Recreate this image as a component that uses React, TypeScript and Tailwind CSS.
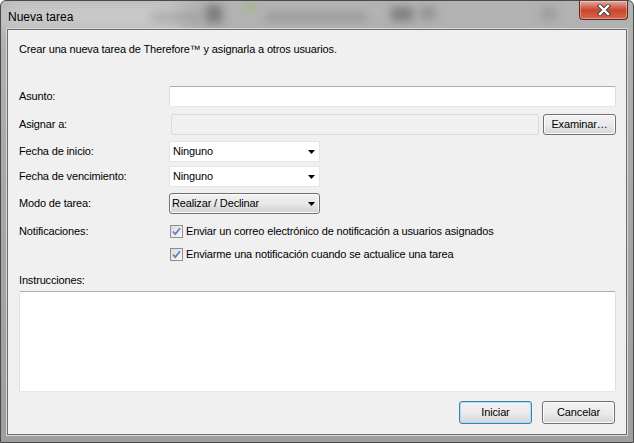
import React from "react";

const font = { fontFamily: '"Liberation Sans", Arial, sans-serif' };

function Arrow() {
  return (
    <svg width="7" height="4" viewBox="0 0 7 4" className="shrink-0">
      <path d="M0 0h7L3.5 4z" fill="#000" />
    </svg>
  );
}

function Check() {
  return (
    <span className="w-[13px] h-[13px] shrink-0 border border-[#8f8f8f] bg-gradient-to-br from-[#dcdcdc] to-[#f8f8f8] grid place-items-center">
      <svg width="9" height="9" viewBox="0 0 9 9">
        <path d="M1 4.5l2.3 2.6L8 1.2" fill="none" stroke="#5f7fc0" strokeWidth="1.7" />
      </svg>
    </span>
  );
}

function Row({ label, children, className = "" }: { label: string; children?: React.ReactNode; className?: string }) {
  return (
    <div className={`flex items-center ${className}`}>
      <span className="w-[150px] shrink-0">{label}</span>
      {children}
    </div>
  );
}

function Combo({ value }: { value: string }) {
  return (
    <div className="w-[151px] h-[21px] bg-white border border-[#e2e5ea] flex items-center justify-between pl-[3px] pr-[4px]">
      <span>{value}</span>
      <Arrow />
    </div>
  );
}

export default function App() {
  return (
    <div
      className="w-[634px] h-[443px] relative overflow-hidden flex flex-col rounded-t-[6px] border border-[#4a4a4a] bg-gradient-to-b from-[#b3b3b3] via-[#a6a6a6] to-[#9e9e9e] text-[11px] tracking-[-0.15px] text-black"
      style={font}
    >
      {/* blurred glass behind title bar */}
      <div className="absolute left-[0px] top-[0px] w-[180px] h-[30px] bg-[#d2d2d2] blur-[10px] opacity-80" />
      <div className="absolute left-[205px] top-[4px] w-[16px] h-[18px] bg-[#555] blur-[5px] opacity-60" />
      <div className="absolute left-[245px] top-[3px] w-[10px] h-[6px] bg-[#8fbf5a] blur-[3px] opacity-60" />
      <div className="absolute left-[265px] top-[12px] w-[100px] h-[8px] bg-[#7a7a7a] blur-[5px] opacity-50" />
      <div className="absolute left-[150px] top-[12px] w-[50px] h-[8px] bg-[#8a8a8a] blur-[5px] opacity-50" />
      <div className="absolute left-[390px] top-[6px] w-[22px] h-[14px] bg-[#4a4a4a] blur-[5px] opacity-50" />
      <div className="absolute left-[420px] top-[6px] w-[14px] h-[12px] bg-[#6a6a6a] blur-[5px] opacity-50" />
      <div className="absolute left-[540px] top-[6px] w-[16px] h-[14px] bg-[#8a8a8a] blur-[5px] opacity-50" />

      {/* title bar */}
      <div className="relative h-[28px] shrink-0 flex items-start">
        <span className="pl-[7px] pt-[7px] text-[12px] tracking-normal text-black">Nueva tarea</span>
        <div className="ml-auto mr-[5px] w-[49px] h-[19px] rounded-b-[4px] border border-t-0 border-[#5c2a22] bg-gradient-to-b from-[#e4a99d] via-[#c8452c] to-[#d8674b] grid place-items-center shadow-[inset_0_0_0_1px_rgba(255,255,255,0.35)]">
          <svg width="16" height="12" viewBox="0 0 16 12">
            <path d="M4 2l8 8M12 2l-8 8" stroke="#3b3b3b" strokeWidth="4.2" strokeLinecap="square" />
            <path d="M4 2l8 8M12 2l-8 8" stroke="#fff" strokeWidth="2.4" strokeLinecap="square" />
          </svg>
        </div>
      </div>

      {/* client area */}
      <div className="relative flex-1 mx-[6px] mb-[7px] border border-[#6b6b6b] shadow-[0_0_0_1px_#d9d9d9] bg-[#f0f0f0] flex flex-col pl-[11px] pr-[10px]">
        <p className="mt-[12px] leading-[15px]">Crear una nueva tarea de Therefore™ y asignarla a otros usuarios.</p>

        <Row label="Asunto:" className="mt-[29px] h-[21px]">
          <div className="flex-1 h-[21px] bg-white border border-[#abadb3] border-l-[#dbdfe6] border-r-[#dbdfe6] border-b-[#e3e9ef] rounded-[2px]" />
        </Row>

        <Row label="Asignar a:" className="mt-[7px] h-[21px]">
          <div className="flex-1 ml-[2px] h-[21px] bg-[#f0f0f0] border border-[#dadada] rounded-[2px]" />
          <button className="ml-[4px] w-[73px] h-[21px] rounded-[3px] border border-[#707070] bg-gradient-to-b from-[#f2f2f2] via-[#ebebeb] to-[#d5d5d5] shadow-[inset_0_0_0_1px_#fcfcfc] text-[11px]">
            Examinar…
          </button>
        </Row>

        <Row label="Fecha de inicio:" className="mt-[6px] h-[21px]">
          <Combo value="Ninguno" />
        </Row>

        <Row label="Fecha de vencimiento:" className="mt-[4px] h-[21px]">
          <Combo value="Ninguno" />
        </Row>

        <Row label="Modo de tarea:" className="mt-[6px] h-[21px]">
          <div className="w-[151px] h-[21px] rounded-[3px] border border-[#707070] bg-gradient-to-b from-[#f2f2f2] via-[#e8e8e8] to-[#d0d0d0] shadow-[inset_0_0_0_1px_#fcfcfc] flex items-center justify-between pl-[2px] pr-[4px]">
            <span>Realizar / Declinar</span>
            <Arrow />
          </div>
        </Row>

        <Row label="Notificaciones:" className="mt-[10px] h-[15px]">
          <div className="flex items-center gap-[3px] ml-[1px]">
            <Check />
            <span>Enviar un correo electrónico de notificación a usuarios asignados</span>
          </div>
        </Row>

        <div className="mt-[8px] h-[15px] flex items-center gap-[3px] pl-[151px]">
          <Check />
          <span>Enviarme una notificación cuando se actualice una tarea</span>
        </div>

        <p className="mt-[11px] leading-[15px]">Instrucciones:</p>

        <div className="mt-[3px] h-[101px] bg-white border border-[#abadb3] border-l-[#dbdfe6] border-r-[#dbdfe6] border-b-[#e3e9ef] rounded-[2px]" />

        <div className="mt-[9px] flex justify-end gap-[10px] pr-[1px]">
          <button className="w-[73px] h-[23px] rounded-[3px] border border-[#3c7fb1] bg-gradient-to-b from-[#f2f2f2] via-[#ebebeb] to-[#d5d5d5] shadow-[inset_0_0_0_1px_#a8e0f7] text-[11px]">
            Iniciar
          </button>
          <button className="w-[73px] h-[23px] rounded-[3px] border border-[#707070] bg-gradient-to-b from-[#f2f2f2] via-[#ebebeb] to-[#d5d5d5] shadow-[inset_0_0_0_1px_#fcfcfc] text-[11px]">
            Cancelar
          </button>
        </div>
      </div>
    </div>
  );
}
